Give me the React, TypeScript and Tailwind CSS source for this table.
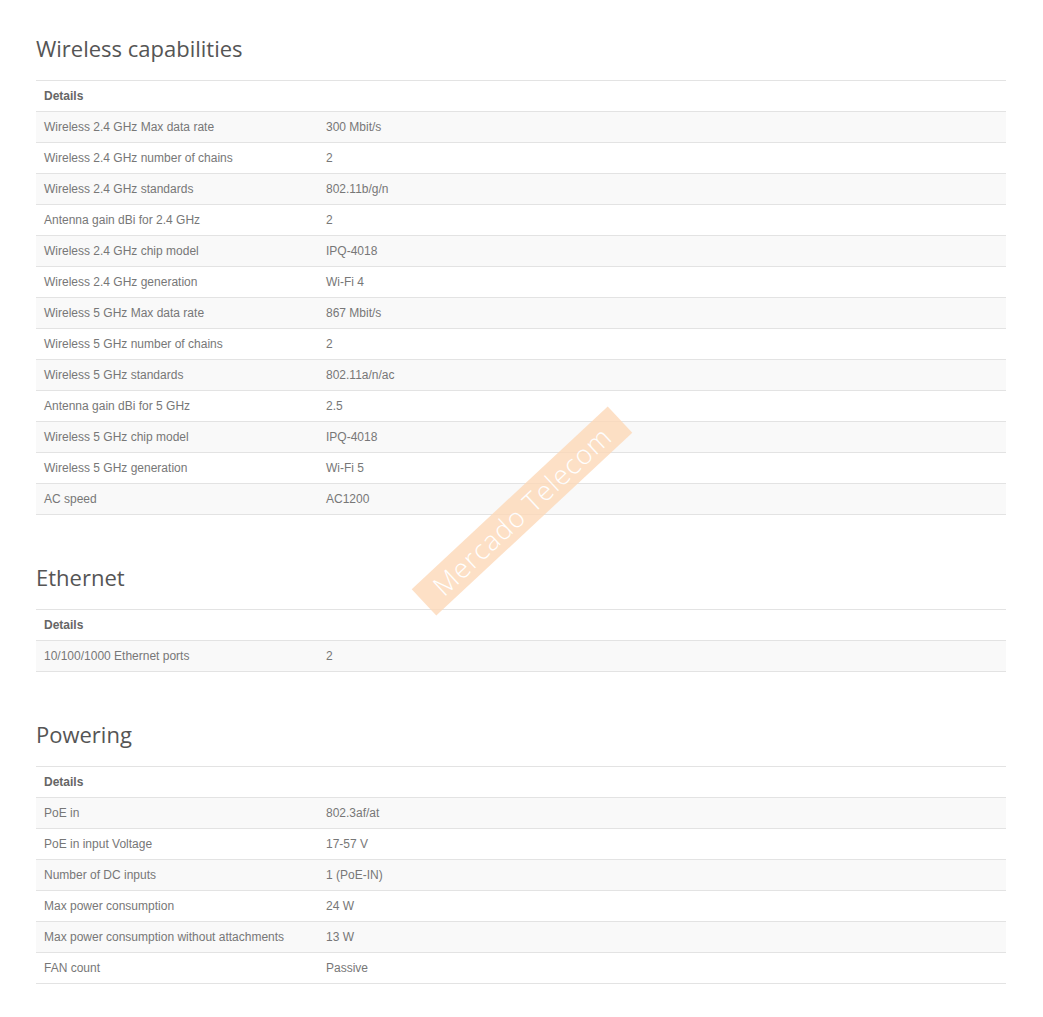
import React from 'react';

type Spec = [string, string];

const SECTIONS: { title: string; rows: Spec[] }[] = [
  {
    title: 'Wireless capabilities',
    rows: [
      ['Wireless 2.4 GHz Max data rate', '300 Mbit/s'],
      ['Wireless 2.4 GHz number of chains', '2'],
      ['Wireless 2.4 GHz standards', '802.11b/g/n'],
      ['Antenna gain dBi for 2.4 GHz', '2'],
      ['Wireless 2.4 GHz chip model', 'IPQ-4018'],
      ['Wireless 2.4 GHz generation', 'Wi-Fi 4'],
      ['Wireless 5 GHz Max data rate', '867 Mbit/s'],
      ['Wireless 5 GHz number of chains', '2'],
      ['Wireless 5 GHz standards', '802.11a/n/ac'],
      ['Antenna gain dBi for 5 GHz', '2.5'],
      ['Wireless 5 GHz chip model', 'IPQ-4018'],
      ['Wireless 5 GHz generation', 'Wi-Fi 5'],
      ['AC speed', 'AC1200'],
    ],
  },
  {
    title: 'Ethernet',
    rows: [['10/100/1000 Ethernet ports', '2']],
  },
  {
    title: 'Powering',
    rows: [
      ['PoE in', '802.3af/at'],
      ['PoE in input Voltage', '17-57 V'],
      ['Number of DC inputs', '1 (PoE-IN)'],
      ['Max power consumption', '24 W'],
      ['Max power consumption without attachments', '13 W'],
      ['FAN count', 'Passive'],
    ],
  },
];

const SpecTable: React.FC<{ title: string; rows: Spec[] }> = ({ title, rows }) => (
  <section className="mt-[47px] first:mt-0">
    <h2 className="text-[22px] leading-[30px] text-[#555] mb-[17px] font-['Open_Sans',sans-serif]">{title}</h2>
    <table className="w-full border-collapse text-[12px] text-[#777] font-['Liberation_Sans',Arial,sans-serif]">
      <thead>
        <tr className="border-t border-b border-[#e3e3e3]">
          <th className="h-[31px] px-2 text-left font-bold text-[#666]" colSpan={2}>Details</th>
        </tr>
      </thead>
      <tbody>
        {rows.map(([label, value], i) => (
          <tr key={label} className={`border-b border-[#e3e3e3] ${i % 2 === 0 ? 'bg-[#f9f9f9]' : 'bg-white'}`}>
            <td className="h-[31px] w-[282px] px-2">{label}</td>
            <td className="h-[31px] px-2">{value}</td>
          </tr>
        ))}
      </tbody>
    </table>
  </section>
);

export default function App() {
  return (
    <div className="relative min-h-[1017px] bg-white">
      <div className="pl-[36px] pr-[37px] pt-[33px]">
        {SECTIONS.map(s => (
          <SpecTable key={s.title} title={s.title} rows={s.rows} />
        ))}
      </div>

      {/* watermark */}
      <div className="pointer-events-none absolute left-[522px] top-[511px] -translate-x-1/2 -translate-y-1/2 -rotate-[43deg]">
        <div className="flex h-[36px] w-[268px] items-center justify-center bg-[#fdd9b8] opacity-80">
          <span className="text-[27px] font-light tracking-[1px] text-white font-['Open_Sans',sans-serif]">Mercado Telecom</span>
        </div>
      </div>
    </div>
  );
}
